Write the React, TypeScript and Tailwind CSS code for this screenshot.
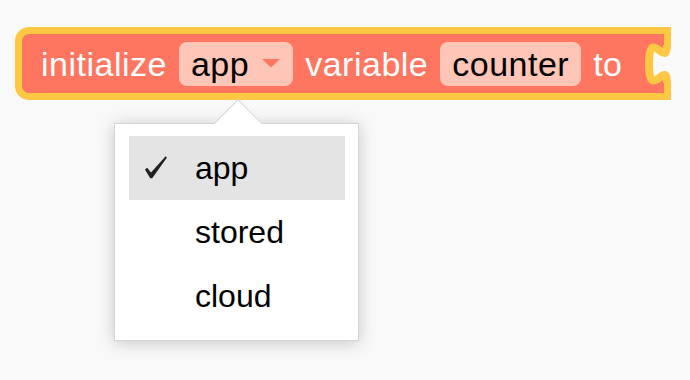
import React from 'react';

const FONT = "font-['Liberation_Sans',Arial,sans-serif]";

const items = [
  { label: 'app', checked: true },
  { label: 'stored', checked: false },
  { label: 'cloud', checked: false },
];

function Notch() {
  return (
    <svg
      className="absolute right-[-7px] top-[-7px]"
      width="40"
      height="73"
      viewBox="0 0 40 73"
    >
      <path d="M36,18 c0,25 -18,-20 -18,19 s18,-6 18,19 L40,56 L40,18 Z" fill="#f9f9f9" />
      <path
        d="M36,18 c0,25 -18,-20 -18,19 s18,-6 18,19"
        fill="none"
        stroke="#fec845"
        strokeWidth="8"
      />
    </svg>
  );
}

function Check() {
  return (
    <svg width="26" height="26" viewBox="0 0 26 26" className="ml-[14px]">
      <path
        d="M2,14.5 L4.2,12.8 L8,17.6 L22.6,1.2 L24,2.4 L9.2,23.2 L7.2,23.2 Z"
        fill="#222"
      />
    </svg>
  );
}

function Field({ text, dropdown }: { text: string; dropdown?: boolean }) {
  return (
    <div className="flex h-[44px] items-center gap-3 rounded-lg bg-[#ffc5b6] px-3 text-black">
      <span>{text}</span>
      {dropdown && (
        <svg width="20" height="9" viewBox="0 0 20 9">
          <path d="M1,0 L19,0 L10,8.5 Z" fill="#ff7660" />
        </svg>
      )}
    </div>
  );
}

export default function App() {
  return (
    <div className={`relative h-[380px] w-[690px] bg-[#f9f9f9] pl-[15px] pt-[27px] ${FONT}`}>
      <div className="relative flex h-[73px] w-[656px] items-center gap-3 rounded-l-[14px] border-[7px] border-[#fec845] bg-[#ff7660] pl-[19px] text-[34px] leading-none tracking-[0.5px] text-white">
        <span>initialize</span>
        <Field text="app" dropdown />
        <span>variable</span>
        <Field text="counter" />
        <span>to</span>
        <Notch />
      </div>

      <div className="absolute left-[114px] top-[123px] h-[218px] w-[245px] border border-[#d4d4d4] bg-white px-[13px] py-3 pl-[14px] shadow-[0_2px_16px_rgba(0,0,0,0.2)]">
        <div className="absolute left-[87px] top-[-26px] h-[26px] w-[72px] overflow-hidden">
          <div className="absolute left-[19px] top-[8px] h-[34px] w-[34px] rotate-45 border-l border-t border-[#d4d4d4] bg-white" />
        </div>
        {items.map((item) => (
          <div
            key={item.label}
            className={`flex h-[64px] items-center text-[32px] leading-none text-black ${item.checked ? 'bg-[#e4e4e4]' : ''}`}
          >
            <span className="flex w-[66px] items-center">{item.checked && <Check />}</span>
            <span>{item.label}</span>
          </div>
        ))}
      </div>
    </div>
  );
}
